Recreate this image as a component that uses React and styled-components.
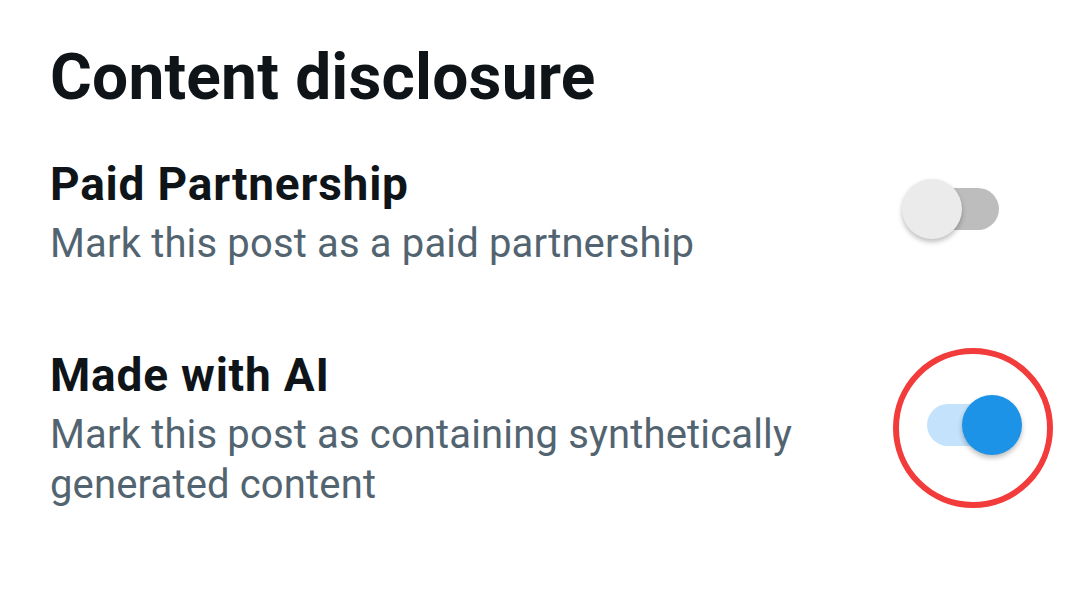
import styled, { createGlobalStyle } from "styled-components";

const GlobalStyle = createGlobalStyle`
  html, body {
    margin: 0;
    padding: 0;
    background: #ffffff;
  }
  body {
    font-family: "Roboto", "Liberation Sans", sans-serif;
  }
`;

const Sheet = styled.div`
  width: 1080px;
  height: 602px;
  box-sizing: border-box;
  padding: 40px 81px 0 50px;
  background: #ffffff;
  overflow: hidden;
`;

const Title = styled.h1`
  margin: 0 0 33px;
  font-size: 64px;
  line-height: 76px;
  font-weight: 700;
  color: #0f1419;
  letter-spacing: 0.2px;
`;

const Row = styled.div`
  display: flex;
  align-items: center;
  justify-content: space-between;
  margin-bottom: ${(p) => p.$gap || 0}px;
`;

const Texts = styled.div`
  display: flex;
  flex-direction: column;
`;

const Label = styled.div`
  font-size: 46px;
  line-height: 70px;
  font-weight: 700;
  color: #0f1419;
  letter-spacing: 0.8px;
`;

const Hint = styled.div`
  font-size: 40px;
  line-height: 50px;
  font-weight: 400;
  color: #536471;
  letter-spacing: 0.15px;
  max-width: 760px;
`;

const SwitchWrap = styled.div`
  position: relative;
  width: 72px;
  height: 60px;
  display: flex;
  align-items: center;
  flex-shrink: 0;
`;

const Track = styled.div`
  width: 72px;
  height: 42px;
  border-radius: 21px;
  background: ${(p) => (p.$on ? "#c4e2fb" : "#bdbdbd")};
`;

const Knob = styled.div`
  position: absolute;
  top: 0;
  left: ${(p) => (p.$on ? "35px" : "-25px")};
  width: 60px;
  height: 60px;
  border-radius: 50%;
  background: ${(p) => (p.$on ? "#1d93e8" : "#ebebeb")};
  box-shadow: 0 3px 5px rgba(0, 0, 0, 0.25);
`;

const Ring = styled.div`
  position: absolute;
  left: -34px;
  top: -47px;
  width: 148px;
  height: 148px;
  border: 6px solid #f23b3b;
  border-radius: 50%;
  pointer-events: none;
`;

function Switch({ on, marked }) {
  return (
    <SwitchWrap>
      <Track $on={on} />
      <Knob $on={on} />
      {marked && <Ring />}
    </SwitchWrap>
  );
}

export default function App() {
  return (
    <>
      <GlobalStyle />
      <Sheet>
        <Title>Content disclosure</Title>
        <Row $gap={71}>
          <Texts>
            <Label>Paid Partnership</Label>
            <Hint>Mark this post as a paid partnership</Hint>
          </Texts>
          <Switch on={false} />
        </Row>
        <Row>
          <Texts>
            <Label>Made with AI</Label>
            <Hint>Mark this post as containing synthetically generated content</Hint>
          </Texts>
          <Switch on marked />
        </Row>
      </Sheet>
    </>
  );
}
